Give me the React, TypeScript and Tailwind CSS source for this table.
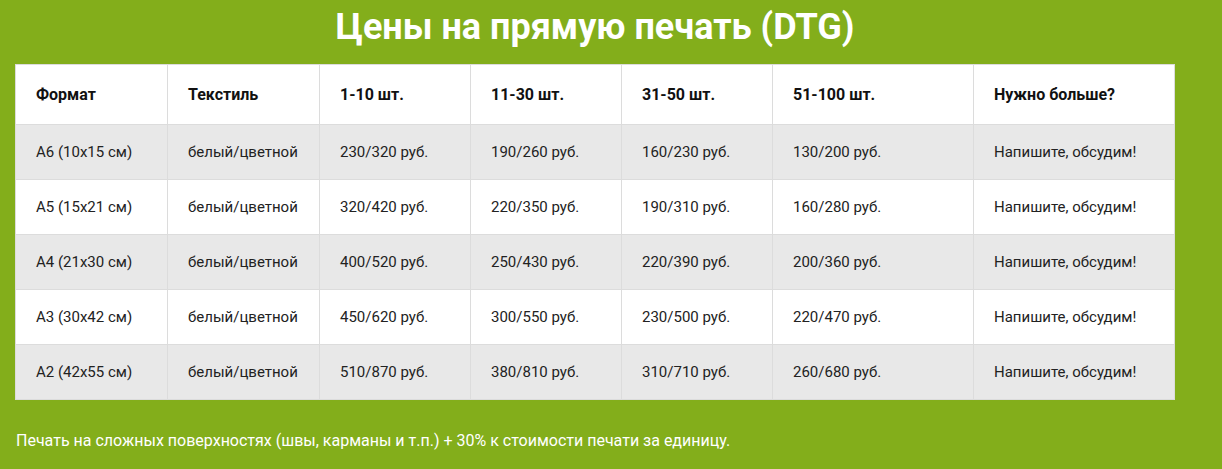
const HEAD = ["Формат", "Текстиль", "1-10 шт.", "11-30 шт.", "31-50 шт.", "51-100 шт.", "Нужно больше?"];

const ROWS = [
  ["A6 (10x15 см)", "белый/цветной", "230/320 руб.", "190/260 руб.", "160/230 руб.", "130/200 руб.", "Напишите, обсудим!"],
  ["A5 (15x21 см)", "белый/цветной", "320/420 руб.", "220/350 руб.", "190/310 руб.", "160/280 руб.", "Напишите, обсудим!"],
  ["A4 (21x30 см)", "белый/цветной", "400/520 руб.", "250/430 руб.", "220/390 руб.", "200/360 руб.", "Напишите, обсудим!"],
  ["A3 (30x42 см)", "белый/цветной", "450/620 руб.", "300/550 руб.", "230/500 руб.", "220/470 руб.", "Напишите, обсудим!"],
  ["A2 (42x55 см)", "белый/цветной", "510/870 руб.", "380/810 руб.", "310/710 руб.", "260/680 руб.", "Напишите, обсудим!"],
];

const WIDTHS = ["w-[152px]", "w-[152px]", "w-[151px]", "w-[151px]", "w-[151px]", "w-[201px]", "w-[201px]"];

export default function App() {
  return (
    <div className="h-[469px] w-[1222px] bg-[#83ae1b] font-['Roboto',sans-serif]">
      <div className="w-[1160px] ml-[15px]">
        <h1 className="h-[64px] pb-[10px] flex items-center justify-center text-[36px] font-bold text-white leading-none">
          Цены на прямую печать (DTG)
        </h1>
        <table className="w-full border-collapse table-fixed">
          <thead>
            <tr className="h-[60px] bg-white">
              {HEAD.map((h, i) => (
                <th
                  key={h}
                  className={`${WIDTHS[i]} border border-[#dcdcdc] pl-[20px] text-left text-[16px] font-bold text-[#111]`}
                >
                  {h}
                </th>
              ))}
            </tr>
          </thead>
          <tbody>
            {ROWS.map((row, r) => (
              <tr key={r} className={r % 2 === 0 ? "h-[55px] bg-[#e8e8e8]" : "h-[55px] bg-white"}>
                {row.map((c, i) => (
                  <td key={i} className="border border-[#dcdcdc] pl-[20px] text-[15px] text-[#222]">
                    {c}
                  </td>
                ))}
              </tr>
            ))}
          </tbody>
        </table>
      </div>
      <p className="mt-[29px] pl-[16px] text-[16px] text-white">
        Печать на сложных поверхностях (швы, карманы и т.п.) + 30% к стоимости печати за единицу.
      </p>
    </div>
  );
}
